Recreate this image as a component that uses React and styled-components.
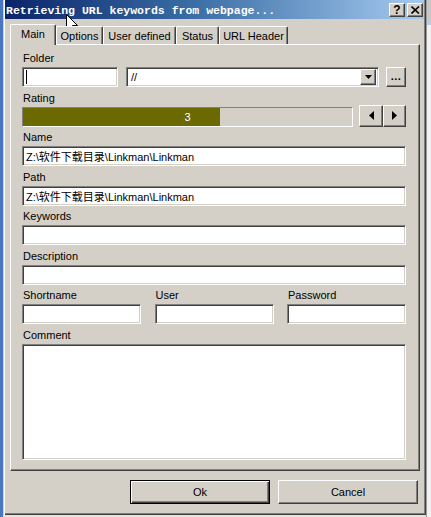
import React from 'react';
import styled, { createGlobalStyle, css } from 'styled-components';

const face = '#d4d0c8';

const GlobalStyle = createGlobalStyle`
	html, body {
		margin: 0;
		padding: 0;
	}
	body {
		background: ${face};
		font-family: "Liberation Sans", "Noto Sans CJK SC", sans-serif;
		font-size: 11px;
		color: #000;
		overflow: hidden;
	}
	* {
		box-sizing: border-box;
	}
`;

const sunken = css`
	border: 1px solid;
	border-color: #808080 #ffffff #ffffff #808080;
	box-shadow: inset 1px 1px 0 #404040, inset -1px -1px 0 ${face};
`;

const raised = css`
	border: 1px solid;
	border-color: #ffffff #404040 #404040 #ffffff;
	box-shadow: inset -1px -1px 0 #808080, inset 1px 1px 0 ${face};
	background: ${face};
`;

const tabs = [
	{ name: 'Main', width: 46 },
	{ name: 'Options', width: 47 },
	{ name: 'User defined', width: 73 },
	{ name: 'Status', width: 43 },
	{ name: 'URL Header', width: 69 },
];

const path = 'Z:\\软件下载目录\\Linkman\\Linkman';

function Triangle({ dir }) {
	const points = {
		left: '5,0 5,9 0,4.5',
		right: '0,0 0,9 5,4.5',
		down: '0,0 7,0 3.5,4',
	}[dir];
	const size = dir === 'down' ? [7, 4] : [5, 9];
	return (
		<svg width={size[0]} height={size[1]} viewBox={`0 0 ${size[0]} ${size[1]}`}>
			<polygon points={points} fill="#000" />
		</svg>
	);
}

function App() {
	const rating = 3;
	return (
		<Screen>
			<GlobalStyle />
			<DesktopEdge />
			<Dialog>
				<TitleBar>
					<Title>Retrieving URL keywords from webpage...</Title>
					<CaptionButton>?</CaptionButton>
					<CaptionButton $close>
						<svg width="9" height="8" viewBox="0 0 9 8">
							<path d="M0.5 0.5 L8 7.5 M8 0.5 L0.5 7.5" stroke="#000" strokeWidth="1.6" />
						</svg>
					</CaptionButton>
				</TitleBar>

				<Body>
					<TabStrip>
						{tabs.map((t, i) => (
							<Tab key={t.name} $width={t.width} $active={i === 0}>
								{t.name}
							</Tab>
						))}
					</TabStrip>

					<Panel>
						<Group>
							<Label>Folder</Label>
							<Row>
								<TextBox $width={96}>
									<Caret />
								</TextBox>
								<Combo>
									<ComboText>//</ComboText>
									<DropButton>
										<Triangle dir="down" />
									</DropButton>
								</Combo>
								<SmallButton>...</SmallButton>
							</Row>
						</Group>

						<Group>
							<Label>Rating</Label>
							<Row $gap={6}>
								<RatingBar>
									<RatingFill style={{ width: `${(rating / 5) * 100}%` }} />
									<RatingValue>{rating}</RatingValue>
								</RatingBar>
								<ArrowPair>
									<ArrowButton $width={24}>
										<Triangle dir="left" />
									</ArrowButton>
									<ArrowButton $width={23}>
										<Triangle dir="right" />
									</ArrowButton>
								</ArrowPair>
							</Row>
						</Group>

						<Group>
							<Label>Name</Label>
							<TextBox>{path}</TextBox>
						</Group>

						<Group>
							<Label>Path</Label>
							<TextBox>{path}</TextBox>
						</Group>

						<Group>
							<Label>Keywords</Label>
							<TextBox />
						</Group>

						<Group>
							<Label>Description</Label>
							<TextBox />
						</Group>

						<ThreeCols>
							<Group>
								<Label>Shortname</Label>
								<TextBox />
							</Group>
							<Group>
								<Label>User</Label>
								<TextBox />
							</Group>
							<Group>
								<Label>Password</Label>
								<TextBox />
							</Group>
						</ThreeCols>

						<Group>
							<Label>Comment</Label>
							<TextArea />
						</Group>
					</Panel>

					<ButtonRow>
						<PushButton $default>Ok</PushButton>
						<PushButton>Cancel</PushButton>
					</ButtonRow>
				</Body>
			</Dialog>
			<RightEdge />

			<Cursor width="13" height="21" viewBox="0 0 13 21">
				<path
					d="M0.5 0.5 L0.5 16.5 L4.5 12.5 L7.5 19.5 L9.5 18.5 L6.5 11.5 L11.5 11.5 Z"
					fill="#fff"
					stroke="#000"
					strokeWidth="1"
				/>
			</Cursor>
		</Screen>
	);
}

export default App;

const Screen = styled.div`
	position: relative;
	display: flex;
	width: 431px;
	height: 517px;
	overflow: hidden;
	background: #e6e4de;
`;

const DesktopEdge = styled.div`
	flex: none;
	width: 3px;
	background: #4a78c0;
`;

const RightEdge = styled.div`
	flex: 1;
	background: linear-gradient(to bottom, #c8c8c8 0, #c8c8c8 20px, #b8cde8 20px, #b8cde8 25px, #f2f2f2 25px);
	border-left: 1px solid #9a9a9a;
`;

const Dialog = styled.div`
	flex: none;
	display: flex;
	flex-direction: column;
	width: 423px;
	height: 515px;
	padding: 0 2px 2px 2px;
	background: ${face};
	box-shadow: inset 1px 0 0 ${face}, inset 2px 0 0 #ffffff, inset -1px -1px 0 #404040,
		inset -2px -2px 0 #808080;
`;

const TitleBar = styled.div`
	display: flex;
	align-items: center;
	height: 19px;
	padding: 1px 1px 0 1px;
	background: linear-gradient(to right, #0a246a 0%, #3a6ea5 45%, #a6caf0 100%);
`;

const Title = styled.div`
	flex: 1;
	padding-top: 1px;
	font-family: "Liberation Mono", "DejaVu Sans Mono", monospace;
	font-weight: bold;
	font-size: 11.5px;
	color: #ffffff;
	white-space: nowrap;
`;

const CaptionButton = styled.div`
	${raised};
	display: flex;
	align-items: center;
	justify-content: center;
	width: 16px;
	height: 14px;
	margin-left: ${(p) => (p.$close ? '2px' : '0')};
	font-family: "Liberation Sans", sans-serif;
	font-weight: bold;
	font-size: 12px;
	line-height: 1;
`;

const Body = styled.div`
	display: flex;
	flex-direction: column;
	padding: 5px 4px 0 5px;
`;

const TabStrip = styled.div`
	display: flex;
	align-items: flex-end;
	height: 20px;
	position: relative;
	z-index: 1;
`;

const Tab = styled.div`
	display: flex;
	align-items: center;
	justify-content: center;
	width: ${(p) => p.$width}px;
	height: ${(p) => (p.$active ? '21px' : '18px')};
	margin-bottom: ${(p) => (p.$active ? '-1px' : '0')};
	padding-bottom: ${(p) => (p.$active ? '2px' : '0')};
	background: ${face};
	border: 1px solid;
	border-bottom: none;
	border-color: #ffffff #404040 #404040 #ffffff;
	border-radius: 2px 2px 0 0;
	box-shadow: inset -1px 0 0 #808080;
	white-space: nowrap;
`;

const Panel = styled.div`
	display: flex;
	flex-direction: column;
	gap: 0.5px;
	padding: 3px 13px 10px 11px;
	border: 1px solid;
	border-color: #ffffff #404040 #404040 #ffffff;
	box-shadow: inset -1px -1px 0 #808080;
`;

const Group = styled.div`
	display: flex;
	flex-direction: column;
	min-width: 0;
`;

const Label = styled.div`
	height: 19px;
	padding: 4px 0 0 1px;
	line-height: 13px;
	white-space: nowrap;
`;

const Row = styled.div`
	display: flex;
	align-items: flex-end;
	gap: ${(p) => p.$gap ?? 8}px;
	height: 20px;
`;

const TextBox = styled.div`
	${sunken};
	display: flex;
	align-items: center;
	flex: ${(p) => (p.$width ? 'none' : '1')};
	width: ${(p) => (p.$width ? `${p.$width}px` : '100%')};
	height: 20px;
	min-height: 20px;
	padding: 0 3px;
	background: #ffffff;
	white-space: nowrap;
	overflow: hidden;
`;

const Caret = styled.span`
	display: block;
	width: 1px;
	height: 14px;
	background: #000;
`;

const Combo = styled.div`
	${sunken};
	display: flex;
	align-items: center;
	flex: 1;
	height: 20px;
	margin-right: -1px;
	padding: 2px;
	background: #ffffff;
`;

const ComboText = styled.span`
	flex: 1;
	padding-left: 2px;
`;

const DropButton = styled.div`
	${raised};
	display: flex;
	align-items: center;
	justify-content: center;
	width: 16px;
	height: 16px;
`;

const SmallButton = styled.div`
	${raised};
	display: flex;
	align-items: center;
	justify-content: center;
	flex: none;
	width: 20px;
	height: 20px;
	padding-bottom: 3px;
	font-weight: bold;
	letter-spacing: 0.5px;
`;

const RatingBar = styled.div`
	position: relative;
	flex: 1;
	height: 20px;
	border: 1px solid;
	border-color: #808080 #ffffff #ffffff #808080;
	background: ${face};
`;

const RatingFill = styled.div`
	height: 100%;
	background: #6b6a00;
`;

const RatingValue = styled.span`
	position: absolute;
	inset: 0;
	display: flex;
	align-items: center;
	justify-content: center;
	color: #ffffff;
`;

const ArrowPair = styled.div`
	display: flex;
	height: 22px;
	align-self: flex-end;
`;

const ArrowButton = styled.div`
	${raised};
	display: flex;
	align-items: center;
	justify-content: center;
	width: ${(p) => p.$width}px;
	height: 22px;
`;

const ThreeCols = styled.div`
	display: grid;
	grid-template-columns: repeat(3, 1fr);
	column-gap: 13.5px;
`;

const TextArea = styled.div`
	${sunken};
	height: 116px;
	background: #ffffff;
`;

const ButtonRow = styled.div`
	display: flex;
	justify-content: flex-end;
	gap: 8px;
	margin-top: 9px;
	padding-right: 2px;
`;

const PushButton = styled.div`
	${raised};
	display: flex;
	align-items: center;
	justify-content: center;
	width: 140px;
	height: 24px;
	${(p) =>
		p.$default &&
		css`
			border: 1px solid #000000;
			box-shadow: inset 1px 1px 0 #ffffff, inset -1px -1px 0 #404040, inset -2px -2px 0 #808080;
		`}
`;

const Cursor = styled.svg`
	position: absolute;
	left: 66px;
	top: 14px;
	pointer-events: none;
`;
